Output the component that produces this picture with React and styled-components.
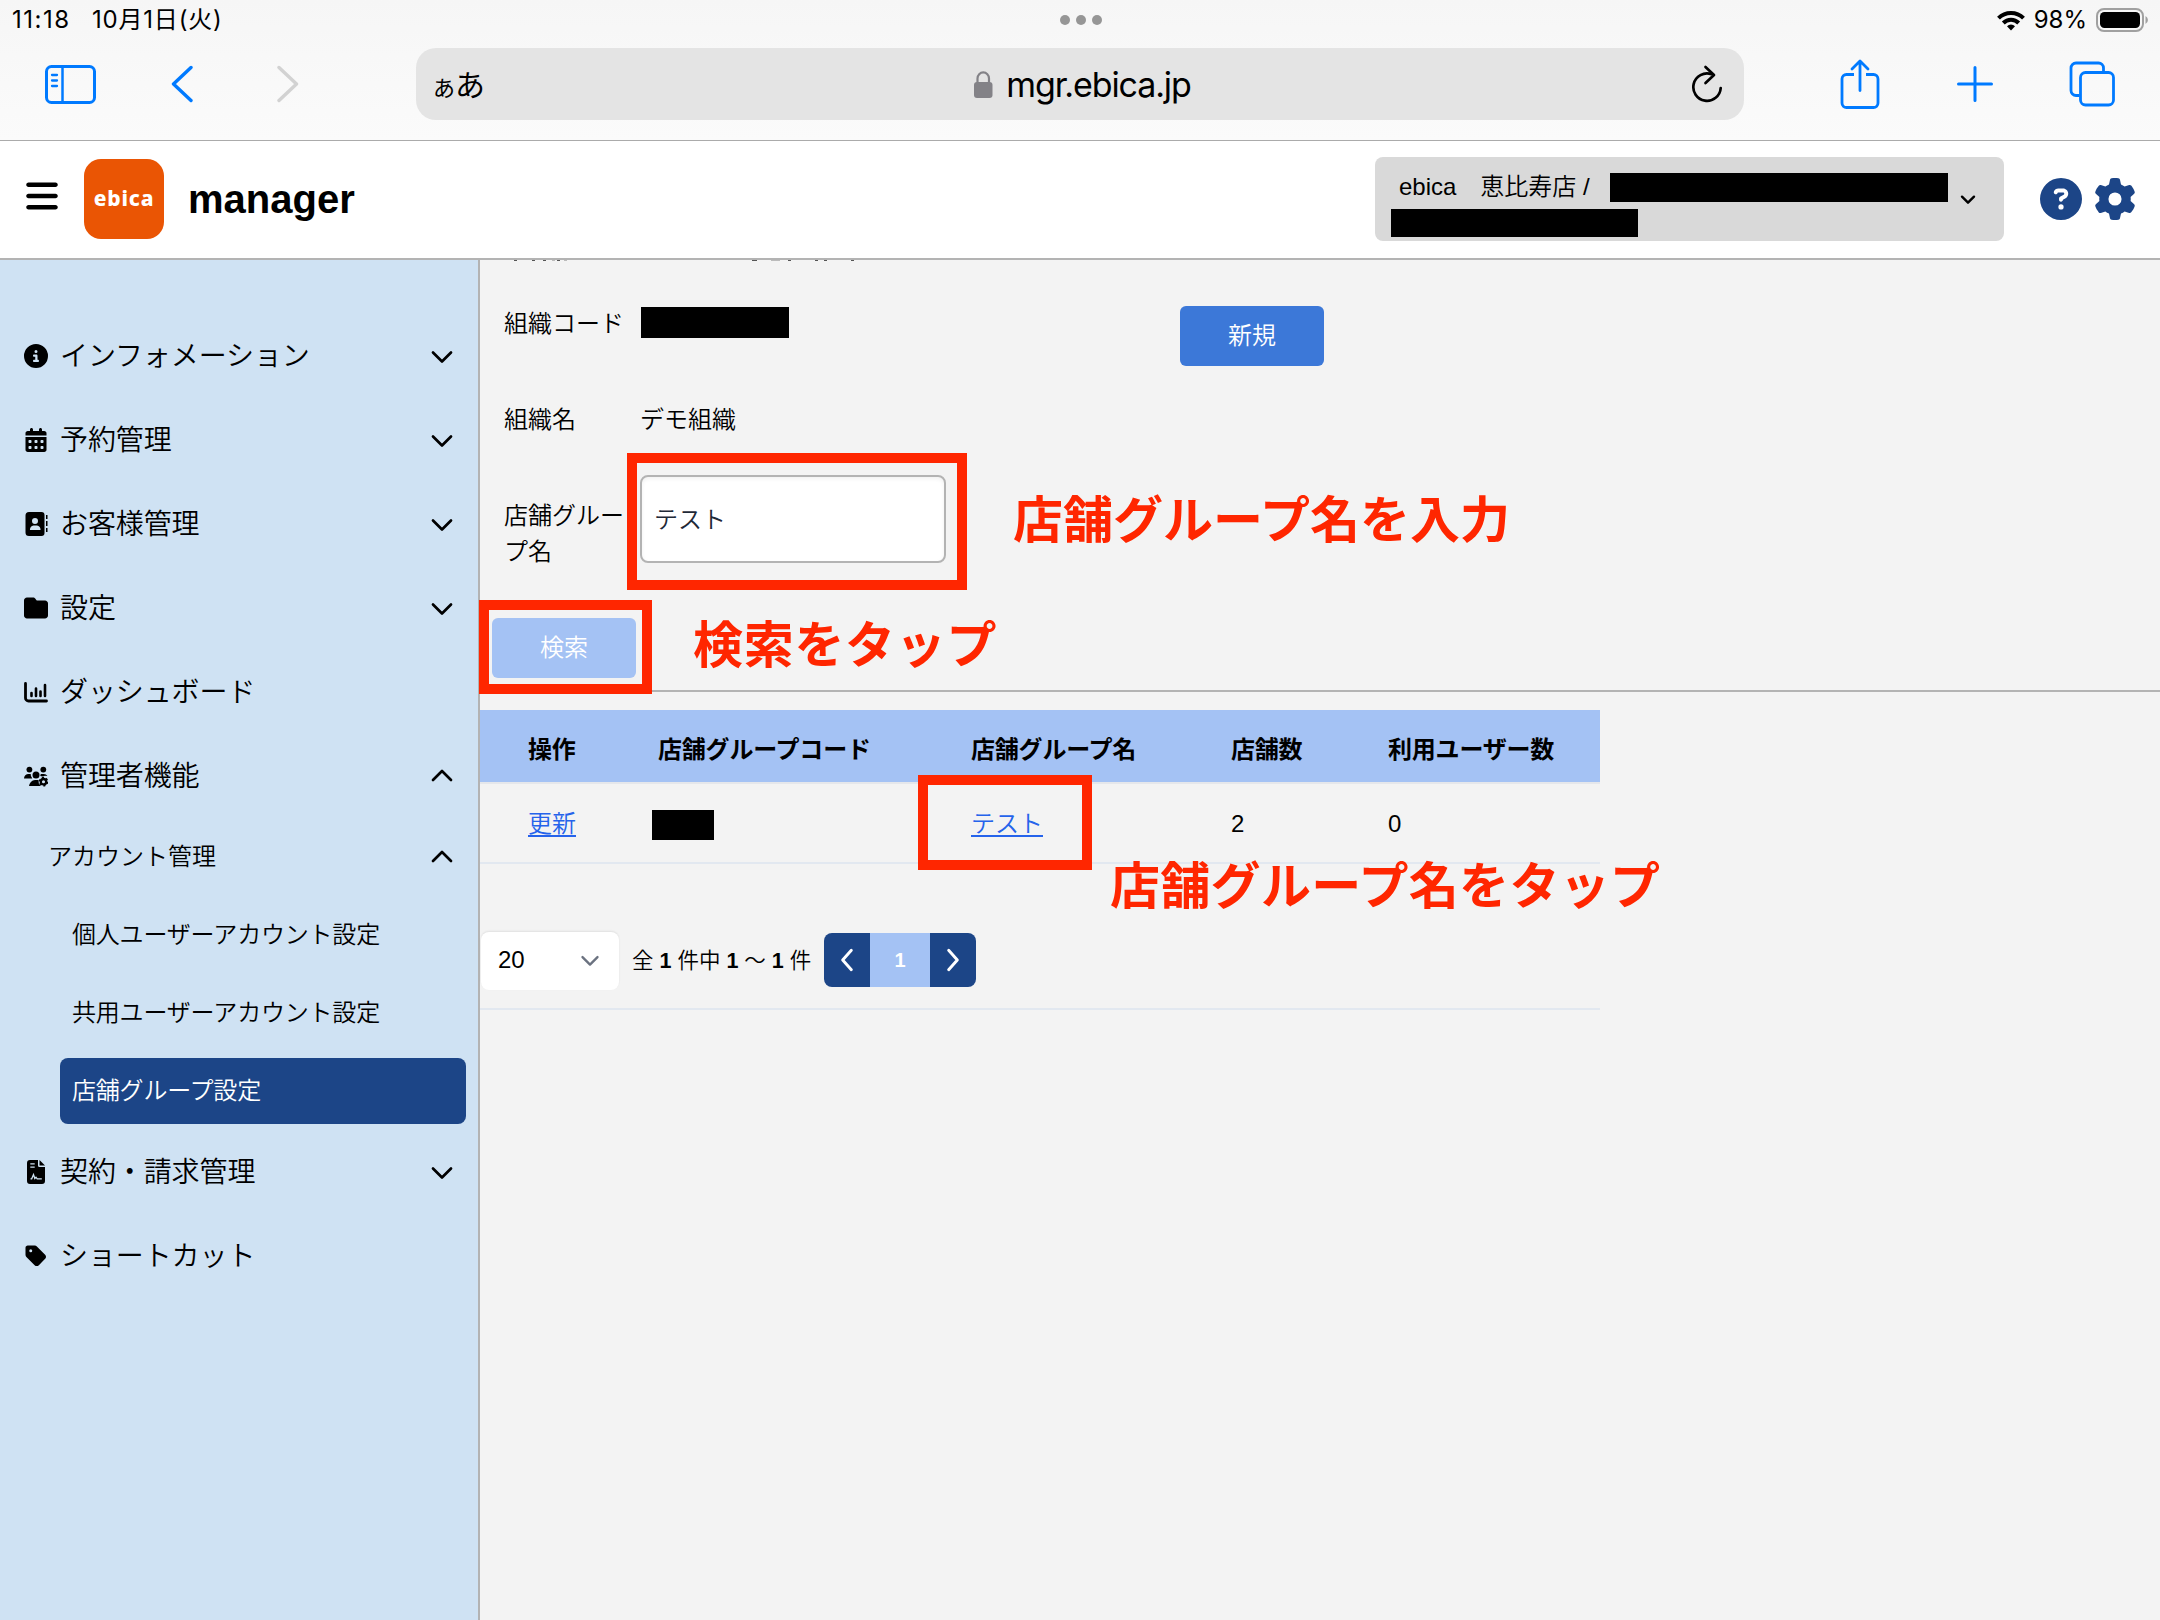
import React from "react";
import styled, { createGlobalStyle, css } from "styled-components";
import {
  FaCircleInfo,
  FaCalendarDays,
  FaFolder,
  FaTag,
  FaGear,
  FaCircleQuestion,
  FaBars,
} from "react-icons/fa6";

const ContactIcon = () => (
  <svg width="24" height="24" viewBox="0 0 24 24">
    <path
      fillRule="evenodd"
      d="M5 0h12.500a3 3 0 0 1 3 3v18a3 3 0 0 1-3 3H5a3.500 3.500 0 0 1-3.500-3.500v-17A3.500 3.500 0 0 1 5 0zM11 6a3 3 0 1 0 0 6 3 3 0 0 0 0-6zM9.500 13.500A4 4 0 0 0 6 18h10.500a4 4 0 0 0-3.500-4.500z"
    />
    <path d="M22 3h1.500v4H22zM22 9h1.500v5H22zM22 16h1.500v4H22z" />
  </svg>
);

const ChartIcon = () => (
  <svg width="24" height="24" viewBox="0 0 24 24" fill="none" stroke="currentColor" strokeLinecap="round">
    <path strokeWidth="2.800" d="M1.500 3.500v14.500a3 3 0 0 0 3 3h18" />
    <path strokeWidth="2.600" d="M7.500 13v3M12 8.500v7.500M16.500 11.500v4.500M21 5v11" />
  </svg>
);

const UsersGearIcon = () => (
  <svg width="24" height="24" viewBox="0 0 24 24">
    <circle cx="5.400" cy="5.600" r="2.900" />
    <circle cx="19.300" cy="5.600" r="2.900" />
    <path d="M0 14.500a4.500 4.500 0 0 1 4.500-4.500h2.200a6 6 0 0 0 1.600 4.500zM16.200 12a5 5 0 0 0 .5-2h2.800a4.500 4.500 0 0 1 4 2l-2.500-.300-2.500.800z" />
    <circle cx="12" cy="11" r="3.500" />
    <path d="M5 22a6.500 6.500 0 0 1 6-6h3.500l.3 3.500 1.700 2.500z" />
    <circle cx="19.500" cy="17.700" r="2.700" fill="none" stroke="currentColor" strokeWidth="2.300" />
    <circle cx="19.500" cy="17.700" r="4" fill="none" stroke="currentColor" strokeWidth="1.700" strokeDasharray="2.100 2.090" />
  </svg>
);

const ContractIcon = () => (
  <svg width="18" height="24" viewBox="0 0 18 24">
    <path
      fillRule="evenodd"
      d="M3 0h8v5.500a1.500 1.500 0 0 0 1.500 1.500H18v14a3 3 0 0 1-3 3H3a3 3 0 0 1-3-3V3a3 3 0 0 1 3-3zM3.300 3.200v1.300h4.400V3.200zM3.300 6.500v1.300h4.400V6.500z"
    />
    <path d="M12.500 0L18 5.500h-5.500z" />
    <path d="M3.500 18.800h1.200l1.800-4.300 1.300 4 1.200-1.300 1.200 1.600h4.600" fill="none" stroke="#cfe2f3" strokeWidth="1.300" />
  </svg>
);

const Chevron = ({ dir = "down", size = 24, weight = 2.7 }) => {
  const paths = {
    down: "M3 8.500l9 9 9-9",
    up: "M3 16l9-9 9 9",
    left: "M16 3l-8 9 8 9",
    right: "M8 3l8 9-8 9",
  };
  return (
    <svg width={size} height={size} viewBox="0 0 24 24" fill="none" stroke="currentColor" strokeWidth={weight} strokeLinecap="round" strokeLinejoin="round">
      <path d={paths[dir]} />
    </svg>
  );
};

const menus = [
  { name: "インフォメーション", icon: <FaCircleInfo />, dir: "down" },
  { name: "予約管理", icon: <FaCalendarDays />, dir: "down" },
  { name: "お客様管理", icon: <ContactIcon />, dir: "down" },
  { name: "設定", icon: <FaFolder />, dir: "down" },
  { name: "ダッシュボード", icon: <ChartIcon /> },
  { name: "管理者機能", icon: <UsersGearIcon />, dir: "up" },
];

const bottomMenus = [
  { name: "契約・請求管理", icon: <ContractIcon />, dir: "down" },
  { name: "ショートカット", icon: <FaTag /> },
];

const MenuRow = ({ menu }) => (
  <MenuItem>
    <MenuIcon>{menu.icon}</MenuIcon>
    <MenuName>{menu.name}</MenuName>
    {menu.dir && <Chevron dir={menu.dir} />}
  </MenuItem>
);

const StatusBar = () => (
  <Status>
    <Clock>
      <Time>11:18</Time>
      <Today>10月1日(火)</Today>
    </Clock>
    <Dots>
      <i />
      <i />
      <i />
    </Dots>
    <Power>
      <svg width="28" height="21" viewBox="0 0 28 21">
        <g fill="none" stroke="#000" strokeWidth="4">
          <path d="M1.500 8.200a17.500 17.500 0 0 1 25 0" />
          <path d="M6.300 13a10.800 10.800 0 0 1 15.400 0" />
        </g>
        <path d="M14 20.500l-4-4.200a5.600 5.600 0 0 1 8 0z" />
      </svg>
      <span>98%</span>
      <svg width="53" height="24" viewBox="0 0 53 24">
        <rect x="1" y="1" width="46" height="22" rx="7" fill="none" stroke="#a0a0a0" strokeWidth="2" />
        <rect x="4" y="4" width="40" height="16" rx="4.500" />
        <path d="M49.500 8v8a4.500 4.500 0 0 0 0-8z" fill="#a0a0a0" />
      </svg>
    </Power>
  </Status>
);

const BrowserBar = () => (
  <Toolbar>
    <NavIcons>
      <svg width="51" height="39" viewBox="0 0 51 39" fill="none" stroke="#007aff" strokeWidth="3" strokeLinecap="round">
        <rect x="1.500" y="1.500" width="48" height="36" rx="5" />
        <path d="M17.500 2v35" strokeWidth="2.500" />
        <path d="M7 10h5M7 15.500h5M7 21h5" strokeWidth="2.300" />
      </svg>
      <svg width="22" height="38" viewBox="0 0 22 38" fill="none" stroke="#007aff" strokeWidth="3.400" strokeLinecap="round" strokeLinejoin="round">
        <path d="M20 2.500L2.500 19 20 35.500" />
      </svg>
      <svg width="22" height="38" viewBox="0 0 22 38" fill="none" stroke="#d2d2d2" strokeWidth="3.400" strokeLinecap="round" strokeLinejoin="round">
        <path d="M2 2.500L19.500 19 2 35.500" />
      </svg>
    </NavIcons>
    <AddressBar>
      <Reader>
        <small>あ</small>あ
      </Reader>
      <Address>
        <svg width="19" height="27" viewBox="0 0 19 27">
          <rect x="0" y="11" width="18.500" height="16" rx="3" fill="#838287" />
          <path d="M3.500 12V7.500a5.700 6 0 0 1 11.500 0V12" fill="none" stroke="#838287" strokeWidth="2.200" />
        </svg>
        mgr.ebica.jp
      </Address>
      <svg width="32" height="38" viewBox="0 0 32 38" fill="none" stroke="#000" strokeWidth="2.700" strokeLinecap="round" strokeLinejoin="round">
        <path d="M20.500 9.200A13.700 13.700 0 1 0 29.700 23" />
        <path d="M14.500 2l8.500 8-8.500 8" />
      </svg>
    </AddressBar>
    <ActionIcons>
      <svg width="40" height="50" viewBox="0 0 40 50" fill="none" stroke="#007aff" strokeWidth="2.800" strokeLinecap="round" strokeLinejoin="round">
        <path d="M14 15.500H6.500a4.500 4.500 0 0 0-4.500 4.500v24a4.500 4.500 0 0 0 4.500 4.500h27a4.500 4.500 0 0 0 4.500-4.500V20a4.500 4.500 0 0 0-4.500-4.500H26" strokeLinecap="butt" />
        <path d="M20 31.500V2.500M12 10l8-8 8 8" />
      </svg>
      <svg width="36" height="36" viewBox="0 0 36 36" fill="none" stroke="#007aff" strokeWidth="3" strokeLinecap="round">
        <path d="M18 1.500v33M1.500 18h33" />
      </svg>
      <svg width="46" height="46" viewBox="0 0 46 46" fill="none" stroke="#007aff" strokeWidth="2.800">
        <path d="M10.500 34.500H7A5 5 0 0 1 2 29.500V7a5 5 0 0 1 5-5h22.500a5 5 0 0 1 5 5v4" />
        <rect x="11.500" y="11.500" width="33" height="32.500" rx="5" />
      </svg>
    </ActionIcons>
  </Toolbar>
);

const AppHeader = () => (
  <Header>
    <FaBars />
    <Logo>ebica</Logo>
    <Title>manager</Title>
    <ShopSelect>
      <ShopLines>
        <ShopLine>
          <span>ebica　恵比寿店 /</span>
          <Mask $w={338} $h={29} />
        </ShopLine>
        <Mask $w={247} $h={28} />
      </ShopLines>
      <Chevron size={16} weight={3.6} />
    </ShopSelect>
    <HeaderIcons>
      <FaCircleQuestion />
      <FaGear />
    </HeaderIcons>
  </Header>
);

const App = () => {
  return (
    <Page>
      <GlobalStyle />
      <Browser>
        <StatusBar />
        <BrowserBar />
      </Browser>
      <AppHeader />
      <Body>
        <Sidebar>
          {menus.map((menu) => (
            <MenuRow key={menu.name} menu={menu} />
          ))}
          <SubMenu>
            アカウント管理
            <Chevron dir="up" />
          </SubMenu>
          <SubLink>個人ユーザーアカウント設定</SubLink>
          <SubLink>共用ユーザーアカウント設定</SubLink>
          <SubLink $active>店舗グループ設定</SubLink>
          {bottomMenus.map((menu) => (
            <MenuRow key={menu.name} menu={menu} />
          ))}
        </Sidebar>
        <Main>
          {/* last pixels of the row scrolled under the header */}
          <svg width="400" height="1" viewBox="0 0 400 1" stroke="#555">
            <path d="M34 .5h3M52 .5h3M63 .5h3M77 .5h3M272 .5h5M308 .5h3M335 .5h3M344 .5h3M371 .5h3" />
            <path d="M72 .5h3M84 .5h3M291 .5h9" stroke="#bbb" />
          </svg>
          <SearchArea>
            <Fields>
              <Label>組織コード</Label>
              <OrgMask $w={148} $h={31} />
              <Label>組織名</Label>
              <span>デモ組織</span>
              <GroupLabel>店舗グループ名</GroupLabel>
              <Input defaultValue="テスト" />
            </Fields>
            <Button $color="#3c78d8">新規</Button>
          </SearchArea>
          <ButtonRow>
            <Button $color="#a4c2f4">検索</Button>
          </ButtonRow>
          <Table>
            <HeadRow>
              <span>操作</span>
              <span>店舗グループコード</span>
              <span>店舗グループ名</span>
              <span>店舗数</span>
              <span>利用ユーザー数</span>
            </HeadRow>
            <Row>
              <TextLink>更新</TextLink>
              <CodeMask $w={62} $h={30} />
              <TextLink>テスト</TextLink>
              <span>2</span>
              <span>0</span>
            </Row>
          </Table>
          <Pagination>
            <PageSize>
              20
              <Chevron size={20} weight={2.8} />
            </PageSize>
            <Count>
              全 <b>1</b> 件中 <b>1</b> ～ <b>1</b> 件
            </Count>
            <Pager>
              <PageButton>
                <Chevron dir="left" size={26} />
              </PageButton>
              <PageButton $current>1</PageButton>
              <PageButton>
                <Chevron dir="right" size={26} />
              </PageButton>
            </Pager>
          </Pagination>
        </Main>
      </Body>
      <Frame $x={627} $y={453} $w={340} $h={137} />
      <Frame $x={479} $y={600} $w={173} $h={94} />
      <Frame $x={918} $y={775} $w={174} $h={95} />
      <Note $x={1013} $y={519}>店舗グループ名を入力</Note>
      <Note $x={693} $y={644} $spacing={0.7}>検索をタップ</Note>
      <Note $x={1110} $y={885} $spacing={0.3}>店舗グループ名をタップ</Note>
    </Page>
  );
};

export default App;

const GlobalStyle = createGlobalStyle`
  * {
    box-sizing: border-box;
  }
  body {
    margin: 0;
    background: #f3f3f3;
  }
  svg {
    display: block;
    flex-shrink: 0;
  }
`;

const Page = styled.div`
  position: relative;
  display: flex;
  flex-direction: column;
  width: 2160px;
  height: 1620px;
  overflow: hidden;
  color: #000;
  font-family: "Liberation Sans", "Noto Sans CJK JP", sans-serif;
  font-size: 24px;
  font-weight: 350;
  line-height: 1.5;
  white-space: nowrap;
`;

const Browser = styled.div`
  height: 141px;
  flex-shrink: 0;
  background: linear-gradient(#f6f6f6, #fbfbfb);
  border-bottom: 1px solid #ababab;
  font-family: Inter, "Noto Sans CJK JP", sans-serif;
  font-weight: 400;
`;

const Status = styled.div`
  display: grid;
  grid-template-columns: 1fr auto 1fr;
  align-items: center;
  height: 40px;
  padding: 0 11px 0 12px;
`;

const Clock = styled.div`
  display: flex;
  font-size: 24px;
`;

const Time = styled.span`
  width: 80px;
  letter-spacing: 1.5px;
`;

const Today = styled.span`
  letter-spacing: 0.8px;
`;

const Dots = styled.div`
  display: flex;
  gap: 6px;

  i {
    width: 10px;
    height: 10px;
    border-radius: 50%;
    background: #969696;
  }
`;

const Power = styled.div`
  display: flex;
  justify-content: flex-end;
  align-items: center;
  gap: 9px;
`;

const Toolbar = styled.div`
  display: flex;
  align-items: center;
  height: 88px;
  padding: 0 45px;
`;

const NavIcons = styled.div`
  display: flex;
  align-items: center;
  width: 371px;

  svg:nth-child(2) {
    margin-left: 75px;
  }
  svg:nth-child(3) {
    margin-left: 84px;
  }
`;

const AddressBar = styled.div`
  display: flex;
  align-items: center;
  justify-content: space-between;
  width: 1328px;
  height: 72px;
  padding: 0 21px 0 17px;
  border-radius: 20px;
  background: #e4e4e4;
`;

const Reader = styled.div`
  width: 54px;
  padding-top: 3px;
  font-size: 30px;

  small {
    font-size: 22px;
  }
`;

const Address = styled.div`
  display: flex;
  align-items: center;
  gap: 13px;
  margin-right: 13px;
  font-size: 34px;
  letter-spacing: -1.1px;
`;

const ActionIcons = styled.div`
  display: flex;
  align-items: center;
  justify-content: space-between;
  width: 275px;
  margin-left: auto;
`;

const Header = styled.header`
  display: flex;
  align-items: center;
  height: 119px;
  flex-shrink: 0;
  padding: 0 24px 1px 24px;
  background: #fff;
  border-bottom: 2px solid #b3b3b3;

  > svg {
    width: 36px;
    height: 36px;
    margin-bottom: 6px;
  }
`;

const Logo = styled.div`
  display: flex;
  align-items: center;
  justify-content: center;
  width: 80px;
  height: 80px;
  margin-left: 24px;
  border-radius: 17px;
  background: #ea5504;
  color: #fff;
  font-family: "Noto Sans", sans-serif;
  font-size: 21px;
  font-weight: 800;
  letter-spacing: 0.8px;
`;

const Title = styled.h1`
  margin: 0 0 0 24px;
  font-size: 40px;
  font-weight: 700;
`;

const ShopSelect = styled.div`
  display: flex;
  align-items: center;
  width: 629px;
  height: 84px;
  margin-left: auto;
  padding-left: 16px;
  border-radius: 8px;
  background: #d9d9d9;
`;

const ShopLines = styled.div`
  display: flex;
  flex-direction: column;
  gap: 7px;
  width: 569px;
  padding-top: 12px;
`;

const ShopLine = styled.div`
  display: flex;
  align-items: center;
  justify-content: space-between;
  height: 29px;
  padding: 0 12px 0 8px;

  span {
    padding-bottom: 2px;
  }
`;

const Mask = styled.div`
  width: ${({ $w }) => $w}px;
  height: ${({ $h }) => $h}px;
  background: #000;
`;

const OrgMask = styled(Mask)`
  margin: 1px 0 0 1px;
`;

const CodeMask = styled(Mask)`
  margin: 2px 0 0 -6px;
`;

const HeaderIcons = styled.div`
  display: flex;
  gap: 12px;
  margin-left: 36px;
  color: #1c4587;
  font-size: 42px;
`;

const Body = styled.div`
  display: flex;
  flex: 1;
`;

const Sidebar = styled.nav`
  width: 480px;
  padding-top: 54px;
  background: #cfe2f3;
  border-right: 2px solid #b3b3b3;
`;

const MenuItem = styled.div`
  display: flex;
  align-items: center;
  height: 84px;
  padding: 0 24px;
  font-size: 28px;

  > svg {
    margin-left: auto;
  }
`;

const MenuIcon = styled.div`
  display: flex;
  justify-content: center;
  width: 24px;
  font-size: 24px;
`;

const MenuName = styled.span`
  margin-left: 12px;
  padding-top: 2px;
  letter-spacing: -0.1px;
`;

const SubMenu = styled.div`
  display: flex;
  align-items: center;
  justify-content: space-between;
  height: 77px;
  margin-bottom: 7px;
  padding: 0 24px 0 48px;
`;

const SubLink = styled.div`
  display: flex;
  align-items: center;
  height: 66px;
  margin: 0 12px 12px 60px;
  padding-left: 12px;
  border-radius: 8px;
  letter-spacing: -0.2px;

  ${({ $active }) =>
    $active &&
    css`
      margin-bottom: 6px;
      background: #1c4587;
      color: #fff;
    `}
`;

const Main = styled.main`
  flex: 1;
`;

const SearchArea = styled.div`
  display: flex;
  align-items: flex-start;
  padding: 45px 0 0 24px;
`;

const Fields = styled.div`
  display: grid;
  grid-template-columns: 120px 306px;
  grid-template-rows: 96px 73px 95px;
  column-gap: 16px;
  align-items: start;
  margin-right: 234px;
`;

const Label = styled.span`
  white-space: normal;
`;

const GroupLabel = styled(Label)`
  padding-top: 23px;
`;

const Input = styled.input`
  width: 306px;
  height: 88px;
  padding: 0 12px 4px;
  border: 2px solid #b3b3b3;
  border-radius: 8px;
  background: #fff;
  box-shadow: inset 0 2px 4px rgba(0, 0, 0, 0.06);
  color: #1f2937;
  font: inherit;
`;

const Button = styled.button`
  width: 144px;
  height: 60px;
  padding: 0;
  border: none;
  border-radius: 6px;
  background: ${({ $color }) => $color};
  color: #fff;
  font: inherit;
`;

const ButtonRow = styled.div`
  display: flex;
  padding: 48px 12px 12px;
  border-bottom: 2px solid #b3b3b3;
`;

const Table = styled.div`
  width: 1120px;
  margin-top: 18px;
`;

const rowLayout = css`
  display: grid;
  grid-template-columns: 130px 313px 260px 157px 1fr;
  align-items: center;
  justify-items: start;
  padding-left: 48px;
`;

const HeadRow = styled.div`
  ${rowLayout}
  height: 74px;
  padding-top: 8px;
  background: #a4c2f4;
  background-clip: padding-box;
  border-bottom: 2px solid #e5e7eb;
  font-weight: 700;
  letter-spacing: -0.2px;
`;

const Row = styled.div`
  ${rowLayout}
  height: 80px;
  padding-top: 1px;
  border-bottom: 2px solid #e2e8f0;
`;

const TextLink = styled.a`
  color: #2563eb;
  text-decoration: underline;
  text-decoration-thickness: 2px;
  text-decoration-skip-ink: none;
  text-underline-offset: 3px;
`;

const Pagination = styled.div`
  display: flex;
  align-items: center;
  width: 1120px;
  height: 146px;
  padding-top: 50px;
  border-bottom: 2px solid #e2e8f0;
`;

const PageSize = styled.div`
  display: flex;
  align-items: center;
  justify-content: space-between;
  width: 138px;
  height: 58px;
  margin: 0 13px 0 1px;
  padding: 0 19px 2px 17px;
  border-radius: 8px;
  background: #fff;
  box-shadow: 0 -1px 2px rgba(0, 0, 0, 0.08);

  svg {
    color: #6b7280;
  }
`;

const Count = styled.span`
  width: 192px;
  font-size: 21.5px;
`;

const Pager = styled.div`
  display: flex;
  height: 54px;
  margin-bottom: 2px;
  border-radius: 8px;
  overflow: hidden;
`;

const PageButton = styled.div`
  display: flex;
  align-items: center;
  justify-content: center;
  width: ${({ $current }) => ($current ? 60 : 46)}px;
  background: ${({ $current }) => ($current ? "#a4c2f4" : "#1c4587")};
  color: #fff;
  font-size: 20px;
  font-weight: 700;
`;

const Frame = styled.div`
  position: absolute;
  left: ${({ $x }) => $x}px;
  top: ${({ $y }) => $y}px;
  width: ${({ $w }) => $w}px;
  height: ${({ $h }) => $h}px;
  border: 10px solid #ff2600;
`;

const Note = styled.div`
  position: absolute;
  left: ${({ $x }) => $x}px;
  top: ${({ $y }) => $y - 34}px;
  line-height: 72px;
  color: #ff2600;
  font-size: 50px;
  font-weight: 700;
  letter-spacing: ${({ $spacing = 0 }) => $spacing}px;
`;
